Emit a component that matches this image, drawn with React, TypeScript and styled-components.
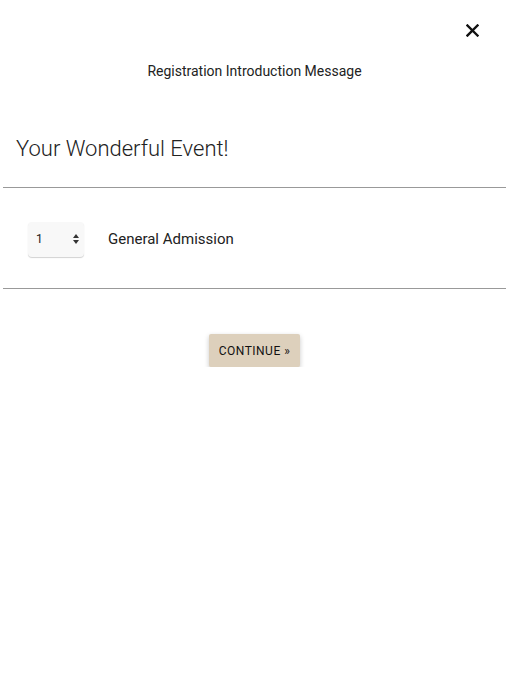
import React from "react";
import styled, { createGlobalStyle } from "styled-components";

const GlobalStyle = createGlobalStyle`
    html, body {
        margin: 0;
        padding: 0;
        background: #ffffff;
        font-family: Roboto, "Liberation Sans", sans-serif;
        color: #222222;
    }
`;

const Page = styled.div`
    padding: 0 3px;
    display: flex;
    flex-direction: column;
`;

const TopBar = styled.div`
    display: flex;
    justify-content: flex-end;
    padding: 20px 24px 0 0;
    height: 20px;
`;

const CloseButton = styled.button`
    border: none;
    background: none;
    padding: 0;
    width: 20px;
    height: 20px;
    display: flex;
    align-items: center;
    justify-content: center;
    cursor: pointer;
`;

const Intro = styled.p`
    margin: 22px 0 0;
    text-align: center;
    font-size: 14px;
    line-height: 18px;
    color: #222;
`;

const EventTitle = styled.h1`
    margin: 55px 0 0;
    padding: 0 13px 24px;
    font-family: "Roboto Light", Roboto, "Liberation Sans", sans-serif;
    font-size: 22px;
    font-weight: 300;
    line-height: 28px;
    color: #222;
    border-bottom: 1px solid #999999;
`;

const TicketRow = styled.div`
    display: flex;
    align-items: center;
    gap: 24px;
    padding: 34px 25px 31px;
    border-bottom: 1px solid #999999;
`;

const QtyBox = styled.div`
    position: relative;
    width: 56px;
    height: 35px;
    border-radius: 4px;
    background: #f8f8f8;
    box-shadow: 0 1px 1px rgba(0, 0, 0, 0.18);
`;

const QtySelect = styled.select`
    appearance: none;
    -webkit-appearance: none;
    width: 100%;
    height: 100%;
    border: none;
    background: transparent;
    padding: 0 0 1px 8px;
    font-family: Roboto, "Liberation Sans", sans-serif;
    font-size: 12px;
    color: #222;
    outline: none;
`;

const Arrows = styled.svg`
    position: absolute;
    right: 5px;
    top: 12px;
    pointer-events: none;
`;

const TicketName = styled.span`
    font-size: 15px;
    color: #222;
    padding-bottom: 2px;
`;

const Actions = styled.div`
    display: flex;
    justify-content: center;
    padding-top: 45px;
`;

const ContinueButton = styled.button`
    border: none;
    border-radius: 2px;
    background: #ddd0bc;
    color: #111;
    font-family: Roboto, "Liberation Sans", sans-serif;
    font-size: 12px;
    font-weight: 400;
    letter-spacing: 0.5px;
    height: 33px;
    padding: 0 10px;
    box-shadow: 0 2px 5px rgba(0, 0, 0, 0.22);
    cursor: pointer;
`;

export default function App() {
    return (
        <>
            <GlobalStyle />
            <Page>
                <TopBar>
                    <CloseButton aria-label="close">
                        <svg width="13" height="13" viewBox="0 0 13 13">
                            <path d="M1.5 1.5 L11.5 11.5 M11.5 1.5 L1.5 11.5" stroke="#111" strokeWidth="2.4" strokeLinecap="square" />
                        </svg>
                    </CloseButton>
                </TopBar>
                <Intro>Registration Introduction Message</Intro>
                <EventTitle>Your Wonderful Event!</EventTitle>
                <TicketRow>
                    <QtyBox>
                        <QtySelect defaultValue="1">
                            {[0, 1, 2, 3, 4, 5, 6, 7, 8, 9, 10].map(n => (
                                <option key={n} value={String(n)}>{n}</option>
                            ))}
                        </QtySelect>
                        <Arrows width="6" height="10" viewBox="0 0 6 10">
                            <path d="M3 0 L6 4 L0 4 Z M3 10 L6 6 L0 6 Z" fill="#333" />
                        </Arrows>
                    </QtyBox>
                    <TicketName>General Admission</TicketName>
                </TicketRow>
                <Actions>
                    <ContinueButton>CONTINUE »</ContinueButton>
                </Actions>
            </Page>
        </>
    );
}
